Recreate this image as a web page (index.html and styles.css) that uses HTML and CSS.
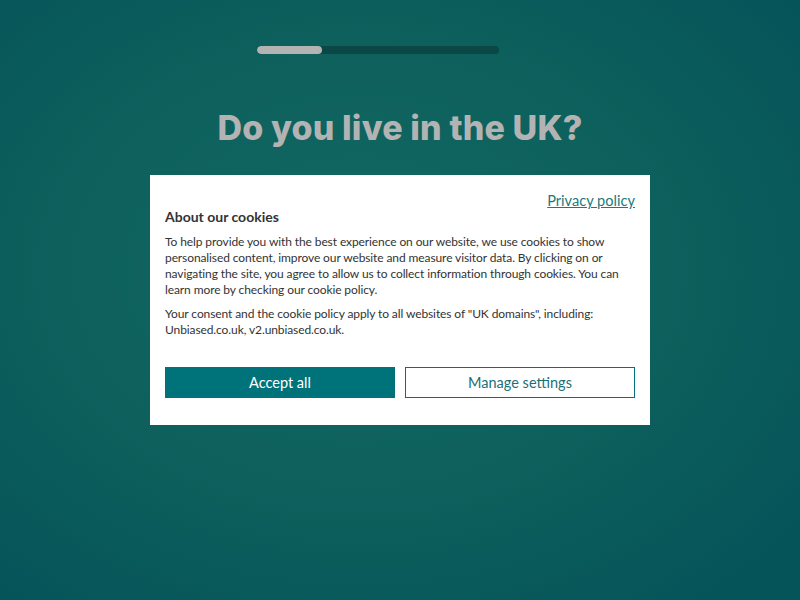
FILE: index.html
```html
<!DOCTYPE html>
<html lang="en">
<head>
<meta charset="utf-8">
<title>Do you live in the UK?</title>
<link rel="stylesheet" href="styles.css">
</head>
<body>
<div class="page">
  <div class="progress"><div class="progress-fill" style="width:27%"></div></div>
  <h1 class="title">Do you live in the UK?</h1>
  <div class="cookie">
    <div class="cookie-top"><a class="privacy" href="#">Privacy policy</a></div>
    <h2 class="cookie-title">About our cookies</h2>
    <p class="cookie-text">To help provide you with the best experience on our website, we use cookies to show personalised content, improve our website and measure visitor data. By clicking on or navigating the site, you agree to allow us to collect information through cookies. You can learn more by checking our cookie policy.</p>
    <p class="cookie-text">Your consent and the cookie policy apply to all websites of "UK domains", including: Unbiased.co.uk, v2.unbiased.co.uk.</p>
    <div class="buttons">
      <button class="btn btn-primary">Accept all</button>
      <button class="btn btn-outline">Manage settings</button>
    </div>
  </div>
</div>
</body>
</html>
```
FILE: styles.css
```css
html, body {
  margin: 0;
  padding: 0;
  height: 100%;
}
body {
  background: radial-gradient(ellipse 70% 70% at 45% 45%, #146963 0%, #0d605c 55%, #05545a 100%);
  font-family: "Lato", "Liberation Sans", sans-serif;
  overflow: hidden;
}
.page {
  display: flex;
  flex-direction: column;
  align-items: center;
  padding-top: 46px;
}
.progress {
  width: 242px;
  height: 8px;
  border-radius: 4px;
  background: #0a4745;
  overflow: hidden;
  margin-left: -44px;
}
.progress-fill {
  height: 100%;
  background: #b3b3b3;
  border-radius: 4px;
}
.title {
  margin: 53px 0 0;
  font-family: "Inter", "Liberation Sans", sans-serif;
  font-weight: 800;
  font-size: 34px;
  line-height: 42px;
  letter-spacing: 0.15px;
  color: #b3b3b3;
}
.cookie {
  margin-top: 26px;
  width: 470px;
  height: 220px;
  padding: 15px;
  background: #fff;
  box-sizing: content-box;
  color: #333;
}
.cookie-top {
  display: flex;
  justify-content: flex-end;
  height: 17px;
}
.privacy {
  color: #1c7a7d;
  font-size: 14.6px;
  line-height: 22px;
  height: 22px;
  text-decoration: underline;
}
.cookie-title {
  margin: 0;
  font-size: 14px;
  font-weight: 700;
  line-height: 19px;
  color: #333;
}
.cookie-text {
  margin: 8px 0 0;
  font-size: 12px;
  line-height: 16px;
  letter-spacing: -0.1px;
  color: #333;
}
.buttons {
  display: flex;
  gap: 10px;
  margin-top: 29px;
}
.btn {
  flex: 1;
  height: 31px;
  font-family: "Lato", "Liberation Sans", sans-serif;
  font-size: 14.5px;
  border: 1px solid #00727a;
  cursor: pointer;
}
.btn-primary {
  background: #00727a;
  color: #fff;
}
.btn-outline {
  background: #fff;
  color: #1c6f78;
}
```
